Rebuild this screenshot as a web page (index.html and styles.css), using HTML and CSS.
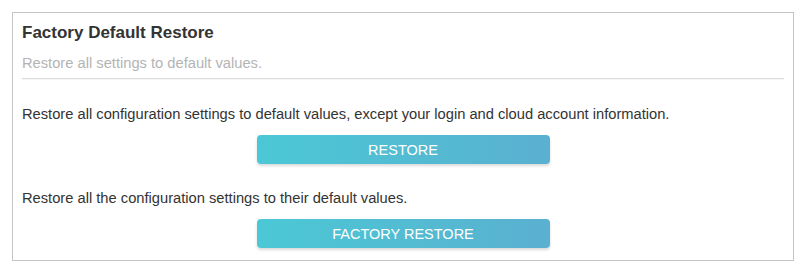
FILE: index.html
```html
<!DOCTYPE html>
<html>
<head>
<meta charset="utf-8">
<link rel="stylesheet" href="styles.css">
</head>
<body>
<div class="panel">
  <div class="header">
    <h2 class="title">Factory Default Restore</h2>
    <p class="subtitle">Restore all settings to default values.</p>
  </div>
  <div class="section first">
    <p class="desc">Restore all configuration settings to default values, except your login and cloud account information.</p>
    <button class="btn">RESTORE</button>
  </div>
  <div class="section second">
    <p class="desc">Restore all the configuration settings to their default values.</p>
    <button class="btn">FACTORY RESTORE</button>
  </div>
</div>
</body>
</html>
```

FILE: styles.css
```css
html, body { margin: 0; padding: 0; background: #fff; }
body {
  font-family: "Liberation Sans", Arial, sans-serif;
  padding: 12px 14px 0 12px;
}
.panel {
  border: 1px solid #c4c4c4;
  width: 782px;
  height: 249px;
  box-sizing: border-box;
  padding: 0 9px;
}
.header {
  border-bottom: 1px solid #dcdcdc;
  box-shadow: 0 1px 1px rgba(0,0,0,0.04);
  padding-top: 10px;
  padding-bottom: 6px;
}
.title {
  margin: 0;
  font-size: 17px;
  font-weight: bold;
  color: #333;
  line-height: 20px;
}
.subtitle {
  margin: 11px 0 0;
  font-size: 14.7px;
  color: #b4b4b4;
  line-height: 18px;
}
.section {
  display: flex;
  flex-direction: column;
  align-items: center;
}
.desc {
  align-self: stretch;
  margin: 0;
  font-size: 14.7px;
  color: #333;
  line-height: 18px;
}
.first .desc { margin-top: 26px; }
.second .desc { margin-top: 25px; }
.btn {
  margin-top: 12px;
  width: 293px;
  height: 29px;
  border: none;
  border-radius: 4px;
  background: linear-gradient(90deg, #4bc8d5, #5ab0d0);
  box-shadow: 0 2px 3px rgba(0,0,0,0.15);
  color: #fff;
  font-family: "Liberation Sans", Arial, sans-serif;
  font-size: 14.5px;
  padding: 0;
}
```
